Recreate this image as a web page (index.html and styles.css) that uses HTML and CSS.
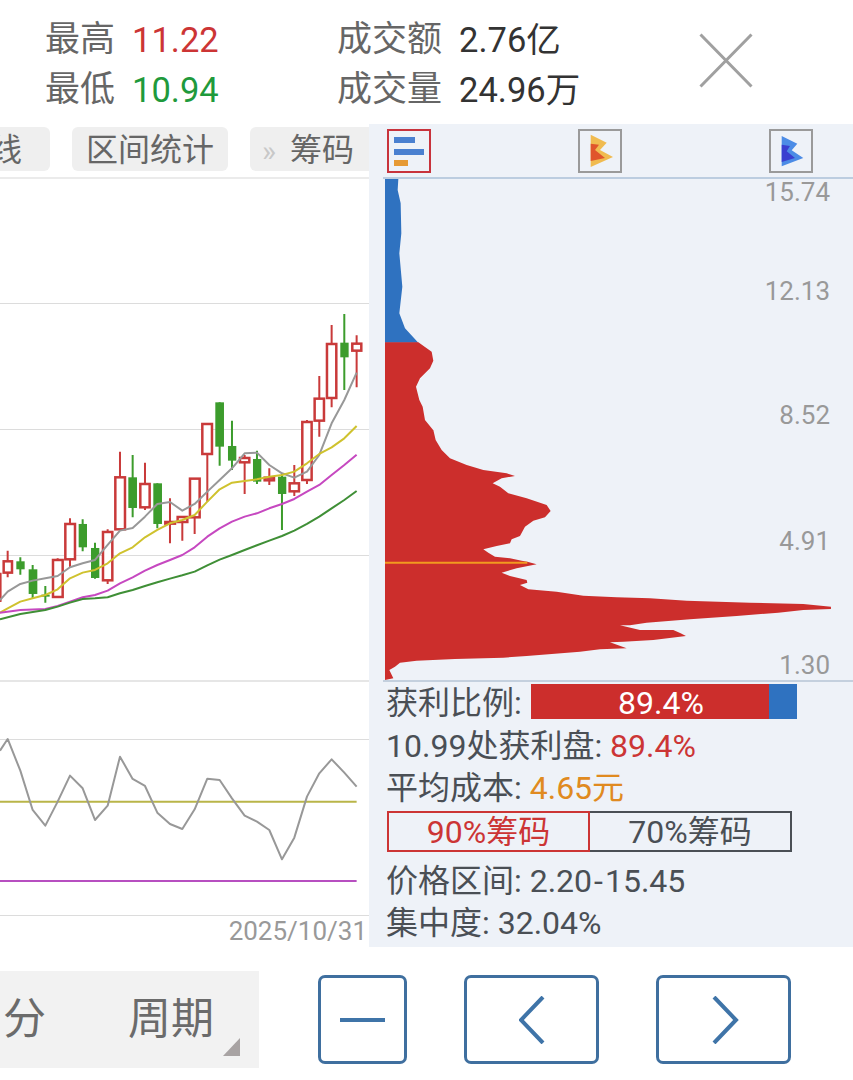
FILE: index.html
```html
<!DOCTYPE html>
<html lang="zh-CN">
<head>
    <meta charset="UTF-8">
    <meta name="viewport" content="width=device-width, initial-scale=1.0">
    <title>筹码分布</title>
    <link rel="stylesheet" href="styles.css">
</head>
<body>

<!-- Quote summary -->
<header class="quote">
    <div class="quote-col quote-col-price">
        <div class="quote-row"><span class="quote-label">最高</span><span class="quote-value up">11.22</span></div>
        <div class="quote-row"><span class="quote-label">最低</span><span class="quote-value down">10.94</span></div>
    </div>
    <div class="quote-col">
        <div class="quote-row"><span class="quote-label">成交额</span><span class="quote-value">2.76亿</span></div>
        <div class="quote-row"><span class="quote-label">成交量</span><span class="quote-value">24.96万</span></div>
    </div>
    <svg class="close-icon" width="54" height="55" viewBox="0 0 54 55">
        <path d="M1.500 1.500L52.500 53.500M52.500 1.500L1.500 53.500"/>
    </svg>
</header>

<main class="main">
    <!-- K line chart -->
    <section class="chart-col">
        <div class="tabs">
            <div class="tab tab-cut">均线</div>
            <div class="tab">区间统计</div>
            <div class="tab tab-more"><span class="tab-arrow">»</span>筹码</div>
        </div>
        <svg class="kline" width="369" height="768" viewBox="0 179 369 768">
            <path class="grid" d="M0 303.500H369M0 429.500H369M0 555.500H369M0 739.500H369M0 915.500H369"/>
            <path class="grid-strong" d="M0 681H369"/>

            <g transform="translate(0 300) scale(0.3333)">
                <path class="wick-red" d="M23 752V832M173 775V892M210 655V802M323 688V852M360 455V688M435 488V630M510 595V730M547 648V722M584 534V702M622 370V605M734 465V582M808 505V555M883 495V588M921 360V552M958 228V410M995 75V322M1070 106V262M0 820V905"/>
                <path class="wick-green" d="M61 772V824M98 795V895M136 858V908M248 658V754M285 728V836M398 465V652M472 550V685M659 307V497M696 362V510M771 452V552M846 520V690M1033 42V270"/>

                <rect class="body-red" x="-16" y="822" width="17" height="80"/>
                <rect class="body-red" x="11" y="784" width="25" height="34"/>
                <rect class="body-red" x="159" y="780" width="29" height="111"/>
                <rect class="body-red" x="196" y="672" width="29" height="106"/>
                <rect class="body-red" x="309" y="696" width="28" height="145"/>
                <rect class="body-red" x="346" y="532" width="29" height="156"/>
                <rect class="body-red" x="421" y="552" width="28" height="70"/>
                <rect class="body-red" x="496" y="666" width="29" height="5"/>
                <rect class="body-red" x="533" y="651" width="29" height="15"/>
                <rect class="body-red" x="570" y="536" width="29" height="116"/>
                <rect class="body-red" x="607" y="372" width="29" height="90"/>
                <rect class="body-red" x="720" y="474" width="28" height="13"/>
                <rect class="body-red" x="794" y="533" width="28" height="8"/>
                <rect class="body-red" x="869" y="550" width="28" height="24"/>
                <rect class="body-red" x="907" y="366" width="28" height="174"/>
                <rect class="body-red" x="944" y="296" width="28" height="66"/>
                <rect class="body-red" x="981" y="132" width="28" height="162"/>
                <rect class="body-red" x="1057" y="131" width="27" height="21"/>

                <rect class="body-green" x="49" y="784" width="25" height="24"/>
                <rect class="body-green" x="86" y="808" width="26" height="74"/>
                <rect class="body-green" x="124" y="884" width="25" height="6"/>
                <rect class="body-green" x="236" y="672" width="25" height="70"/>
                <rect class="body-green" x="273" y="744" width="25" height="90"/>
                <rect class="body-green" x="385" y="532" width="26" height="92"/>
                <rect class="body-green" x="460" y="550" width="26" height="122"/>
                <rect class="body-green" x="646" y="307" width="26" height="133"/>
                <rect class="body-green" x="684" y="438" width="25" height="44"/>
                <rect class="body-green" x="759" y="477" width="25" height="68"/>
                <rect class="body-green" x="834" y="530" width="25" height="52"/>
                <rect class="body-green" x="1021" y="128" width="25" height="44"/>

                <polyline class="ma ma5" points="0,900 23,875 61,852 98,842 136,835 173,828 210,802 248,790 285,780 323,735 360,692 398,684 435,650 472,612 510,606 547,632 584,612 622,575 659,540 696,505 734,460 771,458 808,495 846,520 883,533 921,515 958,465 995,370 1033,300 1070,218"/>
                <polyline class="ma ma10" points="0,938 23,925 61,905 98,895 136,885 173,868 210,835 248,818 285,810 323,790 360,760 398,742 435,712 472,690 510,670 547,660 584,645 622,605 659,568 696,548 734,543 771,538 808,530 846,525 883,515 921,490 958,462 995,442 1033,415 1070,378"/>
                <polyline class="ma ma20" points="0,938 61,930 136,927 173,918 210,905 248,892 285,885 323,872 360,850 398,832 435,812 472,795 510,780 547,765 584,742 622,710 659,685 696,665 734,650 771,640 808,625 846,612 883,597 921,575 958,555 995,525 1033,495 1070,464"/>
                <polyline class="ma ma60" points="0,958 61,942 136,930 173,920 210,908 248,897 285,895 323,892 360,880 398,870 435,858 472,847 510,836 547,826 584,815 622,796 659,779 696,765 734,750 771,736 808,722 846,708 883,692 921,672 958,650 995,625 1033,600 1070,573"/>
            </g>

            <g transform="translate(0 680) scale(0.3333)">
                <path class="level level-yellow" d="M0 365H1070"/>
                <path class="level level-purple" d="M0 603H1070"/>
                <polyline class="ma ma5" points="0,212 23,177 61,272 98,390 136,437 173,365 210,287 248,325 285,420 323,377 360,230 398,297 435,318 472,398 510,432 547,447 584,388 622,296 659,300 696,355 734,407 771,425 808,450 846,538 883,473 921,350 958,280 995,238 1033,278 1070,320"/>
            </g>

            <text class="date" x="367" y="940">2025/10/31</text>
        </svg>
    </section>

    <!-- Chip distribution -->
    <section class="chip-col">
        <div class="chip-tools">
            <div class="tool tool-active">
                <svg width="40" height="40" viewBox="0 0 40 40">
                    <rect x="5" y="6" width="21" height="6" fill="#4a80d0"/>
                    <rect x="5" y="18" width="30" height="6" fill="#4a80d0"/>
                    <rect x="5" y="29" width="14" height="6" fill="#e69a35"/>
                </svg>
            </div>
            <div class="tool">
                <svg width="40" height="40" viewBox="0 0 40 40">
                    <path fill="#f0bb50" d="M10.700 3.700L26.700 11.700L20 19L33 26L10.700 36Z"/>
                    <path fill="#e0552c" d="M10.700 12.700L19 13.700L15 19L25 27L10.700 30Z"/>
                </svg>
            </div>
            <div class="tool">
                <svg width="40" height="40" viewBox="0 0 40 40">
                    <path fill="#4c8ce6" d="M10.700 5L26.300 12.700L20.700 19.300L32.300 27L10.700 35.300Z"/>
                    <path fill="#3a3fd0" d="M10.700 13.700L19 15L15.700 20.300L24 27L10.700 31Z"/>
                </svg>
            </div>
        </div>

        <div class="hist-box">
            <svg class="hist" width="470" height="501" viewBox="383 179 470 501">
                <g transform="translate(370 170) scale(0.3333)">
                    <polygon class="hist-blue" points="45,27 85,27 83,60 92,100 94,190 88,250 97,350 88,430 105,475 145,518 45,518"/>
                    <polygon class="hist-red" points="45,517 145,517 185,545 190,572 180,595 150,625 138,650 148,690 158,710 165,750 190,781 45,781"/>
                </g>
                <g transform="translate(370 430) scale(0.3333)">
                    <polygon class="hist-red" points="45,0 190,0 197,30 215,60 240,85 290,105 340,120 410,130 435,138 395,145 368,160 390,170 415,190 470,205 530,225 542,243 525,262 490,272 465,290 450,318 425,328 420,340 380,348 340,358 355,368 375,380 420,385 455,392 472,395 500,403 440,415 395,428 420,438 470,450 472,458 450,465 475,478 560,485 640,497 740,502 840,505 950,512 1140,518 1300,522 1383,530 1383,537 1300,540 1225,548 1100,558 960,568 830,578 780,586 750,586 810,600 910,600 932,610 948,618 850,630 760,635 720,637 770,655 690,658 630,665 470,678 400,683 255,687 140,692 90,698 75,710 58,720 70,745 45,750"/>
                    <path class="hist-avg" d="M45 398H472"/>
                </g>
                <text class="price" x="830" y="201">15.74</text>
                <text class="price" x="830" y="300">12.13</text>
                <text class="price" x="830" y="424">8.52</text>
                <text class="price" x="830" y="550">4.91</text>
                <text class="price" x="830" y="674">1.30</text>
            </svg>
        </div>

        <div class="chip-info">
            <div class="profit-row">
                <span class="profit-label">获利比例:</span>
                <div class="profit-bar"><div class="profit-win">89.4%</div><div class="profit-lose"></div></div>
            </div>
            <div class="info-line">10.99处获利盘: <span class="up">89.4%</span></div>
            <div class="info-line">平均成本: <span class="avg">4.65元</span></div>
            <div class="segment">
                <div class="seg seg-on">90%筹码</div>
                <div class="seg">70%筹码</div>
            </div>
            <div class="info-line">价格区间: 2.20<span class="dash">-</span>15.45</div>
            <div class="info-line">集中度: 32.04%</div>
        </div>
    </section>
</main>

<!-- Bottom controls -->
<footer class="bottom">
    <div class="period">
        <span class="period-min">分</span>
        <span class="period-name">周期</span>
        <span class="period-corner"></span>
    </div>
    <button class="nav-btn nav-minus">
        <svg width="47" height="6" viewBox="0 0 47 6"><path d="M1 3H46"/></svg>
    </button>
    <button class="nav-btn nav-wide">
        <svg width="26" height="48" viewBox="0 0 26 48"><path d="M24 1L2 24L24 47"/></svg>
    </button>
    <button class="nav-btn nav-wide">
        <svg width="30" height="48" viewBox="0 0 30 48"><path d="M5 1L27 24L5 47"/></svg>
    </button>
</footer>

</body>
</html>
```

FILE: styles.css
```css
* {
    box-sizing: border-box;
}
body {
    margin: 0;
    width: 853px;
    height: 1080px;
    overflow: hidden;
    background-color: #fff;
    font-family: Roboto, "Noto Sans CJK SC", sans-serif;
    color: #4a4f55;
}
svg {
    display: block;
}
.up {
    color: #cc3535;
}
.down {
    color: #1f9a3c;
}

/* quote summary */
.quote {
    display: flex;
    align-items: center;
    height: 124px;
    padding: 6px 100px 0 45px;
}
.quote-col {
    display: flex;
    flex-direction: column;
}
.quote-col-price {
    width: 292px;
}
.quote-row {
    display: flex;
    gap: 17px;
    height: 50px;
    line-height: 50px;
    white-space: nowrap;
}
.quote-label {
    font-size: 35px;
    color: #666;
}
.quote-value {
    font-size: 34.500px;
    color: #333;
}
.quote-value.up {
    color: #cc3535;
}
.quote-value.down {
    color: #1f9a3c;
}
.close-icon {
    margin: -9px 0 0 auto;
}
.close-icon path {
    fill: none;
    stroke: #a0a0a0;
    stroke-width: 3;
}

.main {
    display: flex;
    height: 823px;
}

/* left chart */
.chart-col {
    width: 369px;
    overflow: hidden;
}
.tabs {
    display: flex;
    gap: 22px;
    height: 55px;
    padding-top: 3px;
    border-bottom: 2px solid #ebebeb;
    white-space: nowrap;
}
.tab {
    flex: none;
    height: 44px;
    padding: 0 14px;
    line-height: 47px;
    font-size: 32px;
    color: #666;
    background-color: #efefef;
    border-radius: 6px;
}
.tab-cut {
    width: 112px;
    margin-left: -62px;
    padding: 0 28px 0 0;
    text-align: right;
}
.tab-more {
    display: flex;
    width: 119px;
    padding: 0 0 0 12px;
    border-radius: 6px 0 0 6px;
}
.tab-arrow {
    width: 28px;
    color: #c8c8c8;
    font-size: 30px;
}
.grid {
    fill: none;
    stroke: #dcdcdc;
    stroke-width: 1;
}
.grid-strong {
    fill: none;
    stroke: #e6e6e6;
    stroke-width: 2;
}
.wick-red,
.wick-green {
    fill: none;
    stroke-width: 6;
}
.wick-red {
    stroke: #c93a3a;
}
.wick-green {
    stroke: #3c9c2c;
}
.body-red {
    fill: #fff;
    stroke: #c93a3a;
    stroke-width: 7.500;
}
.body-green {
    fill: #3c9c2c;
}
.ma {
    fill: none;
    stroke-width: 6;
    stroke-linejoin: round;
}
.ma5 {
    stroke: #989898;
}
.ma10 {
    stroke: #cfc22e;
}
.ma20 {
    stroke: #c648c0;
}
.ma60 {
    stroke: #3f8f36;
}
.level {
    fill: none;
    stroke-width: 6;
}
.level-yellow {
    stroke: #b9b548;
}
.level-purple {
    stroke: #b74fc0;
}
.date {
    font-size: 26px;
    fill: #999;
    text-anchor: end;
}

/* right panel */
.chip-col {
    width: 484px;
    background-color: #eef2f8;
}
.chip-tools {
    display: flex;
    gap: 147px;
    height: 53px;
    padding: 5px 0 0 18px;
}
.tool {
    width: 44px;
    height: 44px;
    padding: 0;
    border: 2px solid #9a9a9a;
}
.tool-active {
    border-color: #c8333c;
}
.hist-box {
    margin-left: 14px;
    border-top: 2px solid #bccde0;
    border-bottom: 2px solid #c4d0de;
}
.hist {
    overflow: visible;
}
.hist-blue {
    fill: #2f72c0;
}
.hist-red {
    fill: #cc2e2c;
}
.hist-avg {
    fill: none;
    stroke: #f29a1f;
    stroke-width: 6;
}
.price {
    font-size: 26px;
    fill: #999;
    text-anchor: end;
}
.chip-info {
    padding: 2px 0 0 17px;
    font-size: 32px;
    white-space: nowrap;
}
.profit-row {
    display: flex;
    align-items: center;
    height: 35px;
    margin-bottom: 5px;
}
.profit-label {
    width: 145px;
    margin-top: -3px;
}
.profit-bar {
    display: flex;
    width: 266px;
    height: 35px;
}
.profit-win {
    width: 238px;
    padding-left: 22px;
    line-height: 38px;
    text-align: center;
    color: #fff;
    background-color: #cc2e2c;
}
.profit-lose {
    flex: 1;
    background-color: #2f72c0;
}
.info-line {
    height: 42px;
    line-height: 45px;
}
.avg {
    color: #e08a20;
}
.dash {
    margin: 0 2px;
}
.segment {
    display: flex;
    width: 405px;
    height: 41px;
    margin: 3px 0 7px 1px;
}
.seg {
    width: 202px;
    line-height: 39px;
    text-align: center;
    border: 2px solid #4a4f55;
    border-left: 0;
}
.seg-on {
    width: 203px;
    color: #cc3535;
    border: 2px solid #cc3535;
}

/* bottom controls */
.bottom {
    display: flex;
    align-items: center;
    height: 97px;
    margin-top: 24px;
}
.period {
    position: relative;
    display: flex;
    flex: none;
    width: 259px;
    height: 97px;
    padding-left: 3px;
    line-height: 97px;
    font-size: 43px;
    color: #6b6b6b;
    background-color: #f2f2f2;
}
.period-name {
    margin-left: 82px;
}
.period-corner {
    position: absolute;
    left: 223px;
    top: 67px;
    width: 17px;
    height: 18px;
    background-color: #a8a3a3;
    clip-path: polygon(100% 0, 100% 100%, 0 100%);
}
.nav-btn {
    display: flex;
    flex: none;
    align-items: center;
    justify-content: center;
    height: 89px;
    padding: 0;
    background-color: #fff;
    border: 3px solid #3f6f9f;
    border-radius: 7px;
}
.nav-btn path {
    fill: none;
    stroke: #3f74a8;
    stroke-width: 4;
}
.nav-minus {
    width: 89px;
    margin-left: 59px;
}
.nav-wide {
    width: 135px;
    margin-left: 57px;
}
```
